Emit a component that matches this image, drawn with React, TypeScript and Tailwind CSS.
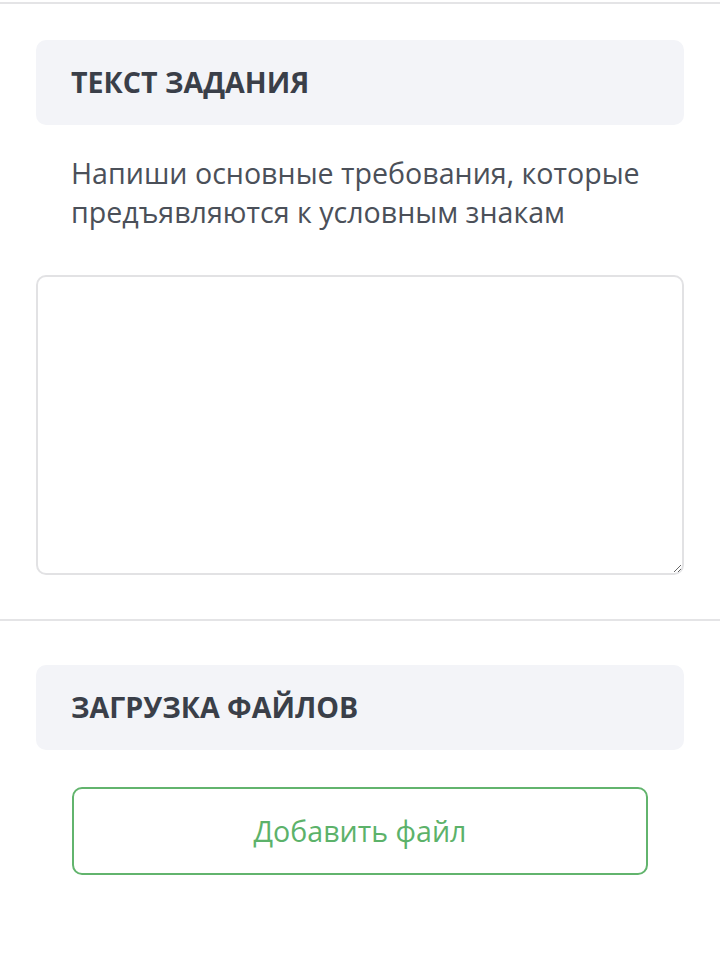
export default function App() {
  return (
    <div className="w-[720px] h-[961px] bg-white overflow-hidden font-['Open_Sans',sans-serif]">
      <div className="h-[2px] mt-[2px] bg-[#e4e4e6]" />
      <div className="px-[36px] pt-[36px]">
        <div className="h-[85px] rounded-[10px] bg-[#f3f4f8] flex items-center px-[35px]">
          <h2 className="text-[28.6px] font-bold text-[#3a3f49] uppercase">Текст задания</h2>
        </div>
        <p className="px-[35px] pt-[28px] text-[28.6px] leading-[39px] text-[#4b5059]">
          Напиши основные требования, которые предъявляются к условным знакам
        </p>
        <textarea className="mt-[44px] block w-full h-[300px] rounded-[10px] border-2 border-[#e2e2e4] outline-none" />
      </div>
      <div className="h-[2px] mt-[44px] bg-[#e4e4e6]" />
      <div className="px-[36px] pt-[44px]">
        <div className="h-[85px] rounded-[10px] bg-[#f3f4f8] flex items-center px-[35px]">
          <h2 className="text-[28.6px] font-bold text-[#3a3f49] uppercase">Загрузка файлов</h2>
        </div>
        <div className="px-[36px] pt-[37px]">
          <button className="w-full h-[88px] rounded-[10px] border-2 border-[#62b46d] text-[28.6px] text-[#5cb26a] flex items-center justify-center">
            Добавить файл
          </button>
        </div>
      </div>
    </div>
  );
}
